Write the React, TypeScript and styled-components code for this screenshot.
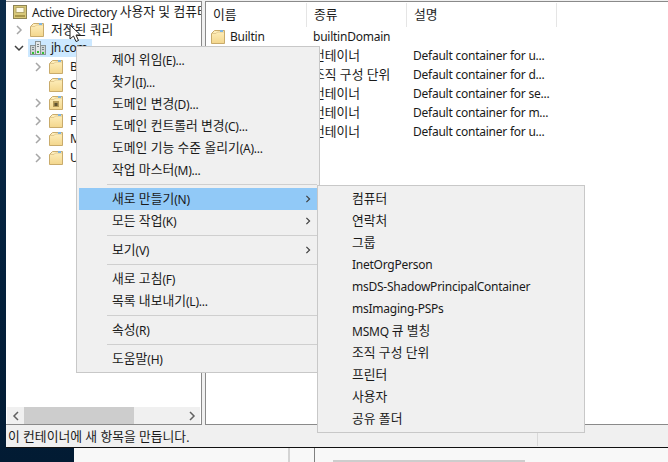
import React from 'react';
import styled, { createGlobalStyle } from 'styled-components';

const GlobalStyle = createGlobalStyle`
  html, body {
    margin: 0;
    padding: 0;
    height: 462px;
    overflow: hidden;
    background: #04203c;
  }
  body {
    font-family: 'Noto Sans', 'Noto Sans CJK KR', sans-serif;
    font-size: 12px;
    letter-spacing: -0.24px;
    color: #1a1a1a;
  }
`;

const Desktop = styled.div`
  position: relative;
  width: 668px;
  height: 462px;
  display: flex;
  flex-direction: column;
  background: linear-gradient(180deg, #0c2c4a 0%, #03203c 60%, #021b33 100%);
`;

const Window = styled.div`
  margin-left: 6px;
  height: 448px;
  flex: none;
  display: flex;
  flex-direction: column;
  background: #f0f0f0;
  border-bottom: 1px solid #111;
  box-sizing: border-box;
`;

const Panes = styled.div`
  flex: 1;
  min-height: 0;
  display: flex;
  gap: 3px;
`;

const TreePane = styled.div`
  width: 196px;
  flex: none;
  box-sizing: border-box;
  margin-top: 1px;
  background: #fff;
  border: 1px solid #8a8a8a;
  border-left: none;
  display: flex;
  flex-direction: column;
  overflow: hidden;
`;

const ListPane = styled(TreePane)`
  width: auto;
  flex: 1;
  border-left: 1px solid #8a8a8a;
  border-right: none;
`;

const TreeBody = styled.div`
  flex: 1;
  padding-top: 1px;
  overflow: hidden;
`;

const TreeRow = styled.div<{ $depth: number }>`
  height: 18.2px;
  display: flex;
  align-items: center;
  padding-left: ${({ $depth }) => 3 + $depth * 19}px;
  white-space: nowrap;
`;

const Twisty = styled.span<{ $open?: boolean }>`
  width: 19px;
  height: 16px;
  flex: none;
  display: flex;
  align-items: center;
  justify-content: center;
  color: ${({ $open }) => ($open ? '#404040' : '#a6a6a6')};
`;

const NodeIcon = styled.span<{ $width: number }>`
  width: ${({ $width }) => $width}px;
  height: 16px;
  flex: none;
  margin: 0 4px 0 2px;
`;

const NodeLabel = styled.span`
  padding: 0 1px 1px;
  line-height: 17px;
  display: inline-block;
`;

const RootRow = styled(TreeRow)`
  padding-left: 5px;
`;

const SelectedNode = styled.div`
  display: flex;
  align-items: center;
  height: 18px;
  width: 64px;
  background: #cce8ff;
`;

const HScroll = styled.div`
  height: 17px;
  margin: 0 1px;
  flex: none;
  display: flex;
  align-items: center;
  background: #f0f0f0;
  color: #606060;
`;

const ScrollThumb = styled.div`
  width: 110px;
  height: 17px;
  margin-right: auto;
  background: #cdcdcd;
`;

const ScrollArrow = styled.span`
  width: 17px;
  height: 17px;
  display: flex;
  align-items: center;
  justify-content: center;
`;

const ListHeader = styled.div`
  height: 25px;
  display: grid;
  grid-template-columns: 101px 100px 150px;
  flex: none;
`;

const HeaderCell = styled.div`
  padding-left: 7px;
  line-height: 22px;
  border-right: 1px solid #e5e5e5;
  height: 24px;
  margin-top: 1px;
`;

const ListRow = styled.div`
  height: 19px;
  flex: none;
  display: grid;
  grid-template-columns: 101px 100px 150px;
  align-items: center;
  white-space: nowrap;
`;

const NameCell = styled.div`
  display: flex;
  align-items: center;
  gap: 3px;
  padding-left: 5px;
  min-width: 0;
  overflow: hidden;
`;

const ListCell = styled.div`
  padding-left: 6px;
  padding-bottom: 1px;
  overflow: hidden;
`;

const StatusBar = styled.div`
  height: 22px;
  flex: none;
  display: flex;
  align-items: center;
  padding-left: 2px;
  white-space: nowrap;
  position: relative;
`;

const StatusDivider = styled.span`
  position: absolute;
  left: 531px;
  top: 7px;
  bottom: 1px;
  width: 1px;
  background: #d9d9d9;
`;

const Taskbar = styled.div`
  flex: 1;
  margin-left: 74px;
  background: #f8f8f8;
  display: flex;
`;

const TaskbarCell = styled.div<{ $width: number; $line: string; $thick?: boolean }>`
  width: ${({ $width }) => $width}px;
  flex: none;
  box-sizing: border-box;
  border-right: ${({ $thick }) => ($thick ? 2 : 1)}px solid ${({ $line }) => $line};
`;

const TaskbarRest = styled.div`
  flex: 1;
  padding-left: 18px;
  display: flex;
  align-items: flex-end;
`;

const TaskbarThumb = styled.div`
  width: 192px;
  height: 2px;
  background: #cdcdcd;
`;

const Menu = styled.div<{ $left: number; $top: number; $width: number }>`
  position: absolute;
  left: ${({ $left }) => $left}px;
  top: ${({ $top }) => $top}px;
  width: ${({ $width }) => $width}px;
  box-sizing: border-box;
  background: #f0f0f0;
  border: 1px solid #c8c8c8;
  padding: 2px;
`;

const MenuRow = styled.div<{ $active?: boolean; $inset: number }>`
  height: 22px;
  box-sizing: border-box;
  display: flex;
  align-items: center;
  justify-content: space-between;
  padding: 0 5px 2px ${({ $inset }) => $inset}px;
  white-space: nowrap;
  background: ${({ $active }) => ($active ? '#91c9f7' : 'transparent')};
`;

const MenuArrow = styled.span`
  display: flex;
  margin-top: 2px;
  color: #404040;
`;

const Separator = styled.div`
  height: 1px;
  margin: 3px 0 3px 28px;
  background: #cfcfcf;
`;

const Pointer = styled.svg`
  position: absolute;
  left: 69px;
  top: 24px;
`;

const Hangul = styled.span`
  font-size: 12.8px;
  letter-spacing: 0;
  vertical-align: 1px;
`;

// Malgun Gothic sets hangul wider than Noto does, so hangul runs get their own size
const Txt = ({ children }: { children: string }) => (
  <>
    {children.split(/([\uac00-\ud7a3]+(?: [\uac00-\ud7a3]+)*)/).map((part, i) =>
      i % 2 ? <Hangul key={i}>{part}</Hangul> : part
    )}
  </>
);

const Chevron = ({ dir, size = 10 }: { dir: 'right' | 'down' | 'left'; size?: number }) => (
  <svg width={size} height={size} viewBox="0 0 10 10" fill="none" stroke="currentColor" strokeWidth="1.5">
    {dir === 'right' && <path d="M3 1l4 4-4 4" />}
    {dir === 'left' && <path d="M7 1L3 5l4 4" />}
    {dir === 'down' && <path d="M1 3l4 4 4-4" />}
  </svg>
);

const Folder = ({ locked }: { locked?: boolean }) => (
  <svg width="16" height="16" viewBox="0 0 16 16" style={{ flex: 'none', display: 'block' }}>
    <defs>
      <linearGradient id="folderFill" x1="0" y1="0" x2="0" y2="1">
        <stop offset="0" stopColor="#fff0bf" />
        <stop offset="1" stopColor="#f3d68c" />
      </linearGradient>
    </defs>
    <path d="M0.5 14.5V4.5L3.5 1.5H13.5V14.5z" fill="url(#folderFill)" stroke="#c9ab6b" />
    <path d="M1 4.5H5L6.5 3H13" fill="none" stroke="#e2c98f" />
    <rect x="9" y="1" width="3" height="2" fill="#7fb4e0" />
    {locked && (
      <>
        <rect x="4" y="6" width="6" height="6" fill="#b59a58" />
        <rect x="5.5" y="8" width="3" height="3" fill="#5f5230" />
      </>
    )}
  </svg>
);

const SnapIn = () => (
  <svg width="14" height="16" viewBox="0 0 14 16" style={{ display: 'block' }}>
    <rect x="0.5" y="1.5" width="13" height="13" fill="#d8c878" stroke="#8e8455" />
    <rect x="3" y="3.5" width="8" height="5" fill="#fffbe6" stroke="#b3a66a" />
    <rect x="2" y="11" width="10" height="2" fill="#a8964a" />
  </svg>
);

const Domain = () => (
  <svg width="16" height="16" viewBox="0 0 16 16" style={{ display: 'block' }}>
    <rect x="0.5" y="5.5" width="5" height="9" fill="#cfd4d6" stroke="#8a9496" />
    <rect x="5.5" y="1.5" width="5" height="13" fill="#e4e7e8" stroke="#8a9496" />
    <rect x="10.5" y="5.5" width="5" height="9" fill="#cfd4d6" stroke="#8a9496" />
    <path d="M2 7.5h2M2 9.5h2M7 4.5h2M7 6.5h2M12 7.5h2M12 9.5h2" stroke="#7a8688" />
    <rect x="2" y="12" width="2" height="2" fill="#35c035" />
    <rect x="7" y="11" width="2" height="2" fill="#35c035" />
    <rect x="12" y="12" width="2" height="2" fill="#35c035" />
  </svg>
);

const treeFolders = [
  { label: 'Builtin', twisty: true },
  { label: 'Computers', twisty: false },
  { label: 'Domain Controllers', twisty: true, locked: true },
  { label: 'ForeignSecurityPrincipals', twisty: true },
  { label: 'Managed Service Accounts', twisty: true },
  { label: 'Users', twisty: true },
];

const listRows = [
  { name: 'Builtin', type: 'builtinDomain', desc: '' },
  { name: 'Computers', type: '컨테이너', desc: 'Default container for u...' },
  { name: 'Domain Controllers', type: '조직 구성 단위', desc: 'Default container for d...' },
  { name: 'ForeignSecurityPrincipals', type: '컨테이너', desc: 'Default container for se...' },
  { name: 'Managed Service Accounts', type: '컨테이너', desc: 'Default container for m...' },
  { name: 'Users', type: '컨테이너', desc: 'Default container for u...' },
];

type MenuItem = { label: string; arrow?: boolean; active?: boolean };

const mainMenu: MenuItem[][] = [
  [
    { label: '제어 위임(E)...' },
    { label: '찾기(I)...' },
    { label: '도메인 변경(D)...' },
    { label: '도메인 컨트롤러 변경(C)...' },
    { label: '도메인 기능 수준 올리기(A)...' },
    { label: '작업 마스터(M)...' },
  ],
  [
    { label: '새로 만들기(N)', arrow: true, active: true },
    { label: '모든 작업(K)', arrow: true },
  ],
  [{ label: '보기(V)', arrow: true }],
  [{ label: '새로 고침(F)' }, { label: '목록 내보내기(L)...' }],
  [{ label: '속성(R)' }],
  [{ label: '도움말(H)' }],
];

const newItems = ['컴퓨터', '연락처', '그룹', 'InetOrgPerson', 'msDS-ShadowPrincipalContainer', 'msImaging-PSPs', 'MSMQ 큐 별칭', '조직 구성 단위', '프린터', '사용자', '공유 폴더'];

export default function App() {
  return (
    <Desktop>
      <GlobalStyle />
      <Window>
        <Panes>
          <TreePane>
            <TreeBody>
              <RootRow $depth={0}>
                <NodeIcon $width={14}><SnapIn /></NodeIcon>
                <NodeLabel><Txt>Active Directory 사용자 및 컴퓨터</Txt></NodeLabel>
              </RootRow>
              <TreeRow $depth={0}>
                <Twisty><Chevron dir="right" /></Twisty>
                <NodeIcon $width={16}><Folder /></NodeIcon>
                <NodeLabel><Txt>저장된 쿼리</Txt></NodeLabel>
              </TreeRow>
              <TreeRow $depth={0}>
                <Twisty $open><Chevron dir="down" /></Twisty>
                <SelectedNode>
                  <NodeIcon $width={16}><Domain /></NodeIcon>
                  <NodeLabel>jh.com</NodeLabel>
                </SelectedNode>
              </TreeRow>
              {treeFolders.map((f) => (
                <TreeRow $depth={1} key={f.label}>
                  <Twisty>{f.twisty && <Chevron dir="right" />}</Twisty>
                  <NodeIcon $width={16}><Folder locked={f.locked} /></NodeIcon>
                  <NodeLabel>{f.label}</NodeLabel>
                </TreeRow>
              ))}
            </TreeBody>
            <HScroll>
              <ScrollArrow><Chevron dir="left" /></ScrollArrow>
              <ScrollThumb />
              <ScrollArrow><Chevron dir="right" /></ScrollArrow>
            </HScroll>
          </TreePane>
          <ListPane>
            <ListHeader>
              <HeaderCell><Txt>이름</Txt></HeaderCell>
              <HeaderCell><Txt>종류</Txt></HeaderCell>
              <HeaderCell><Txt>설명</Txt></HeaderCell>
            </ListHeader>
            {listRows.map((r) => (
              <ListRow key={r.name}>
                <NameCell><Folder />{r.name}</NameCell>
                <ListCell><Txt>{r.type}</Txt></ListCell>
                <ListCell>{r.desc}</ListCell>
              </ListRow>
            ))}
          </ListPane>
        </Panes>
        <StatusBar>
          <span><Txt>이 컨테이너에 새 항목을 만듭니다.</Txt></span>
          <StatusDivider />
        </StatusBar>
      </Window>
      <Taskbar>
        <TaskbarCell $width={216} $line="#d4d4d4" $thick />
        <TaskbarCell $width={25} $line="#808080" />
        <TaskbarRest><TaskbarThumb /></TaskbarRest>
      </Taskbar>

      <Menu $left={76} $top={46} $width={244}>
        {mainMenu.map((group, i) => (
          <React.Fragment key={i}>
            {i > 0 && <Separator />}
            {group.map((row) => (
              <MenuRow $inset={33} $active={row.active} key={row.label}>
                <span><Txt>{row.label}</Txt></span>
                {row.arrow && <MenuArrow><Chevron dir="right" size={8} /></MenuArrow>}
              </MenuRow>
            ))}
          </React.Fragment>
        ))}
      </Menu>
      <Menu $left={317} $top={185} $width={268}>
        {newItems.map((label) => (
          <MenuRow $inset={32} key={label}><span><Txt>{label}</Txt></span></MenuRow>
        ))}
      </Menu>

      <Pointer width="15" height="19" viewBox="0 0 15 19">
        <path d="M1 1v14l3.5-3 2.5 5.5 2.5-1-2.5-5.5h4.5z" fill="#fff" stroke="#222" strokeWidth="1" />
      </Pointer>
    </Desktop>
  );
}
